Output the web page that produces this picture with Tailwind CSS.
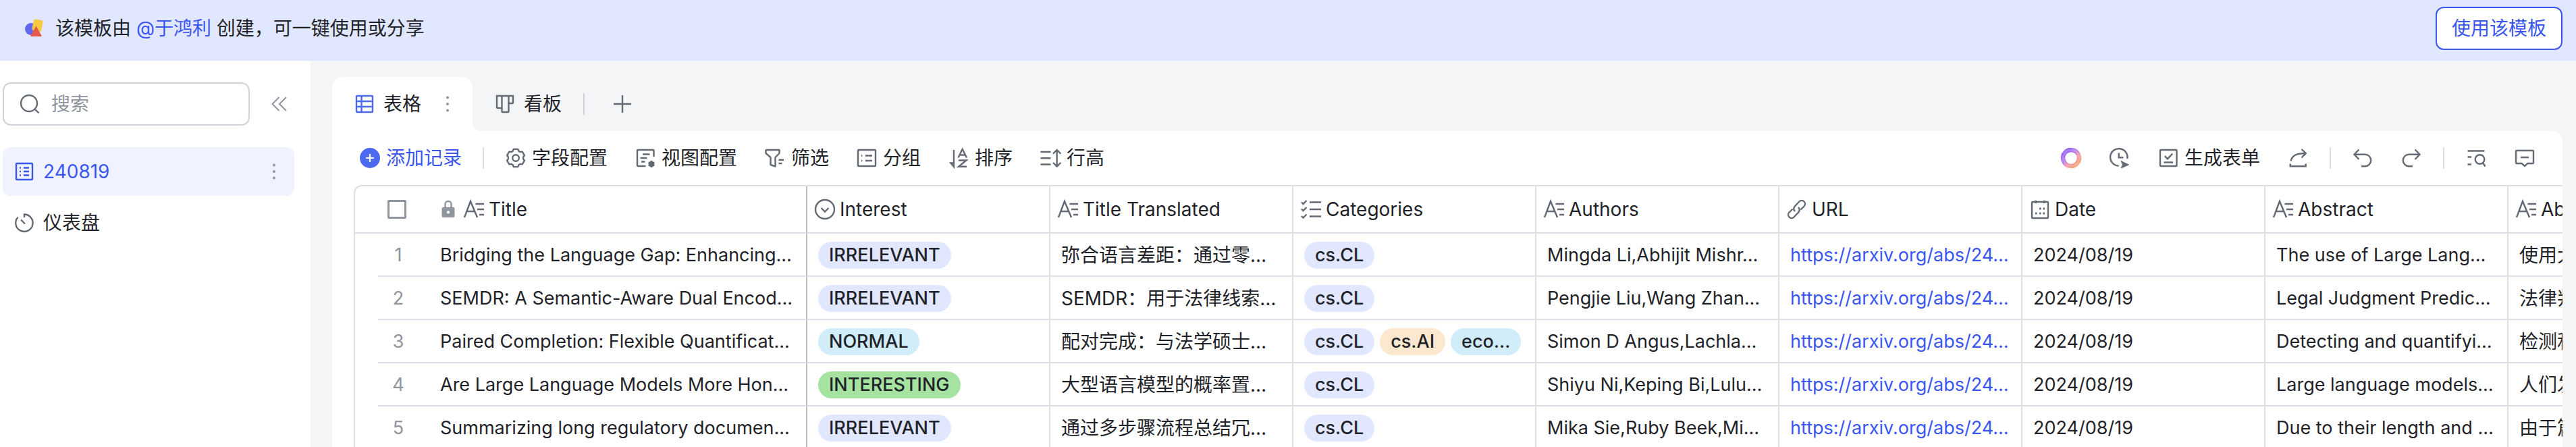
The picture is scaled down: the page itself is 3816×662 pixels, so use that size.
<!DOCTYPE html>
<html lang="zh-CN">
<head>
<meta charset="utf-8">
<meta name="viewport" content="width=device-width, initial-scale=1">
<title>240819</title>
<script src="https://cdn.jsdelivr.net/npm/@tailwindcss/browser@4"></script>
</head>
<body class="flex h-screen flex-col overflow-hidden bg-[#f4f5f7] font-['Inter','Noto_Sans_CJK_SC',sans-serif] text-[28px] leading-10 text-[#1f2329]">

<!-- Icon sprite -->
<svg class="hidden" aria-hidden="true">
  <symbol id="i-text" viewBox="0 0 32 32"><path d="M2 28 11 4 21 28M5.500 19H17.500M18.500 8H31M21 16H31M24 24H31"/></symbol>
  <symbol id="i-sheet" viewBox="0 0 32 32"><rect x="4" y="4" width="24" height="24" rx="1"/><path d="M11.500 4V28M4 12H28M4 20H28"/></symbol>
  <symbol id="i-doc" viewBox="0 0 32 32"><rect x="4" y="4" width="24" height="24" rx="1"/><path d="M9 10.500H11M15 10.500H23M9 16H11M15 16H23M9 21.500H11M15 21.500H23"/></symbol>
  <symbol id="i-gauge" viewBox="0 0 32 32"><path d="M16 8V3.500A12.700 12.700 0 1 1 6.500 7.700M11 11.500 17 17.500"/></symbol>
  <symbol id="i-search" viewBox="0 0 32 32"><circle cx="15" cy="15" r="12"/><path d="M24 24 29.500 29.500"/></symbol>
  <symbol id="i-collapse" viewBox="0 0 32 32"><path d="M15.500 6 5.500 16 15.500 26M26 6 16 16 26 26"/></symbol>
  <symbol id="i-kanban" viewBox="0 0 32 32"><path d="M4 4H28V14A1 1 0 0 1 27 15H21.500V27A1 1 0 0 1 20.500 28H12.500A1 1 0 0 1 11.500 27V22H5A1 1 0 0 1 4 21ZM11.500 4V22M21.500 4V15"/></symbol>
  <symbol id="i-plus" viewBox="0 0 32 32"><path d="M16 3V29M3 16H29"/></symbol>
  <symbol id="i-gear" viewBox="0 0 32 32"><path d="M19.300 2.900 20.200 5.600 22.900 7.200 25.700 6.600 29 12.300 27.100 14.400V17.600L29 19.700 25.700 25.400 22.900 24.800 20.200 26.400 19.300 29.100H12.700L11.800 26.400 9.100 24.800 6.300 25.400 3 19.700 4.900 17.600V14.400L3 12.300 6.300 6.600 9.100 7.200 11.800 5.600 12.700 2.900Z"/><circle cx="16" cy="16" r="4.800"/></symbol>
  <symbol id="i-view" viewBox="0 0 32 32"><path d="M28.500 14V5A1 1 0 0 0 27.500 4H5A1 1 0 0 0 4 5V27A1 1 0 0 0 5 28H16.500M12 10.500H22.500M8.500 16H18.500M10 21.500H15.500"/><path d="M25 20V30M20.700 22.500 29.300 27.500M29.300 22.500 20.700 27.500"/><circle cx="25" cy="25" r="3.200"/></symbol>
  <symbol id="i-filter" viewBox="0 0 32 32"><path d="M3 4H22.500V9L16.500 15V28.500L9.500 26V15L2.500 9V4.500ZM21.500 18.700H29M21.500 24H26.500"/></symbol>
  <symbol id="i-group" viewBox="0 0 32 32"><rect x="3" y="4" width="26" height="24" rx="1"/><path d="M8 12.500H9.500M14 12.500H24M8 20H9.500M14 20H24"/></symbol>
  <symbol id="i-sort" viewBox="0 0 32 32"><path d="M9 4V29L4.500 23.500H9M15.500 15.500 21.700 3 28 15.500M18 11.500H25.500M16 19.500H27.500L16 28.700H28"/></symbol>
  <symbol id="i-height" viewBox="0 0 32 32"><path d="M2.500 7H15.500M2.500 16.300H15.500M2.500 25.500H15.500M25.700 4V28.500M20.700 9 25.700 4 30.700 9M20.700 23.500 25.700 28.500 30.700 23.500"/></symbol>
  <symbol id="i-clock" viewBox="0 0 32 32"><path d="M14.700 27.500A12.700 12.700 0 1 1 27.300 17M14.700 8.500V15.300H21.500"/><path d="M18 20.500 29.500 26 18 31 20.500 26Z" fill="currentColor" stroke-width="1"/></symbol>
  <symbol id="i-form" viewBox="0 0 32 32"><rect x="4" y="4" width="24.500" height="24" rx="1"/><path d="M10.700 13.200 15 17.200 22.300 9.700M9.500 22.500H23"/></symbol>
  <symbol id="i-share" viewBox="0 0 32 32"><path d="M5.500 20.500C7.500 12.500 13 9 27.500 9M21.500 3 27.800 9 21.500 15.500M4.700 24.500V28.300H27.700V24.500"/></symbol>
  <symbol id="i-undo" viewBox="0 0 32 32"><path d="M10.500 3.500 3.500 10.700 10.500 18M4 10.700H19.500A8.700 8.700 0 0 1 19.500 28.200H14"/></symbol>
  <symbol id="i-redo" viewBox="0 0 32 32"><path d="M21.500 3.500 28.500 10.700 21.500 18M28 10.700H12.500A8.700 8.700 0 0 0 12.500 28.200H18"/></symbol>
  <symbol id="i-find" viewBox="0 0 32 32"><path d="M3.500 5.500H28.500M3.500 14.500H9M3.500 25.500H9M26 23 29.500 28.500"/><circle cx="21.500" cy="18" r="6.800"/></symbol>
  <symbol id="i-comment" viewBox="0 0 32 32"><path d="M4 5H28A1 1 0 0 1 29 6V23A1 1 0 0 1 28 24H20.500L16 28 11.500 24H4A1 1 0 0 1 3 23V6A1 1 0 0 1 4 5ZM10 15H22"/></symbol>
  <symbol id="i-select" viewBox="0 0 32 32"><circle cx="16" cy="16" r="14"/><path d="M10.500 14 16 19.500 21.500 14"/></symbol>
  <symbol id="i-multi" viewBox="0 0 32 32"><path d="M2 5.500 4.500 8 9.500 3M2 15.500 4.500 18 9.500 13M2 26 4.500 28.500 9.500 23.500M14 5.500H31M14 16H31M14 26.500H31"/></symbol>
  <symbol id="i-link" viewBox="0 0 32 32"><path d="M13 19C10.500 16.500 11 13.500 13 11.200L19.500 4.500C21.500 2.500 24.500 2.500 26.500 4.500S28.500 9.500 26.500 11.500L21.500 16.500M18 13C20.500 15.500 20 18.500 18 20.800L11.500 27.500C9.500 29.500 6.500 29.500 4.500 27.500S2.500 22.500 4.500 20.500L9.500 15.500"/></symbol>
  <symbol id="i-date" viewBox="0 0 32 32"><rect x="4" y="5" width="24" height="24" rx="1"/><path d="M9.500 3V7M22.500 3V7M15 15H17.500M20.500 15H23M9 22H11.500M15 22H17.500M20.500 22H23" stroke-width="3"/></symbol>
  <symbol id="i-lock" viewBox="0 0 20 32"><path d="M5.500 14V8.500A4.500 4.500 0 0 1 14.500 8.500V14"/><path fill="currentColor" stroke="none" fill-rule="evenodd" d="M2.500 13H17.500A2 2 0 0 1 19.500 15V26A2 2 0 0 1 17.500 28H2.500A2 2 0 0 1 .500 26V15A2 2 0 0 1 2.500 13ZM10 18A2.200 2.200 0 1 0 10 22.400 2.200 2.200 0 1 0 10 18Z"/></symbol>
</svg>

<header class="flex h-[90px] shrink-0 items-center justify-between bg-[#e1e7ff] pr-5 pb-1.5 pl-9">
  <p class="flex items-center gap-[18px]">
    <svg class="size-7" viewBox="0 0 28 28" aria-hidden="true">
      <circle cx="10" cy="15" r="9" fill="#6366ee"/>
      <rect x="12.500" y="1" width="14" height="17" rx="2.500" fill="#f7c944" transform="rotate(10 19 10)"/>
      <path d="M17.500 10.500 25.500 24.500A1 1 0 0 1 24.700 26H10.300A1 1 0 0 1 9.500 24.500Z" fill="#e5584c"/>
    </svg>
    <span>该模板由 <a href="#" class="text-[#3a56f0]">@于鸿利</a> 创建，可一键使用或分享</span>
  </p>
  <button class="h-16 rounded-xl border-2 border-[#3a56f0] bg-white px-[22px] text-[#3a56f0]">使用该模板</button>
</header>

<div class="flex min-h-0 flex-1">
  <aside class="w-[460px] shrink-0 bg-white pt-8 pr-6 pl-1">
    <div class="flex items-center justify-between">
      <label class="flex h-16 w-[366px] items-center gap-4 rounded-xl border-2 border-[#d0d3d8] px-[22px]">
        <svg class="size-8 shrink-0 fill-none stroke-[#646a73] stroke-[2.4]" aria-hidden="true"><use href="#i-search"/></svg>
        <input type="text" aria-label="搜索" placeholder="搜索" class="w-full min-w-0 bg-transparent outline-none placeholder:text-[#8f959e]">
      </label>
      <button aria-label="收起侧栏" class="mr-1.5"><svg class="size-8 fill-none stroke-[#8f959e] stroke-2" aria-hidden="true"><use href="#i-collapse"/></svg></button>
    </div>
    <nav class="mt-8">
      <a href="#" class="flex h-[72px] items-center rounded-xl bg-[#f0f3ff] px-4 text-[#3a56f0]">
        <svg class="size-8 fill-none stroke-current stroke-[2.4]" aria-hidden="true"><use href="#i-doc"/></svg>
        <span class="ml-3 flex-1">240819</span>
        <svg class="mr-2 h-8 w-2 fill-[#8f959e]" viewBox="0 0 8 32" aria-hidden="true"><circle cx="2" cy="6.500" r="2"/><circle cx="2" cy="16" r="2"/><circle cx="2" cy="25.500" r="2"/></svg>
      </a>
      <a href="#" class="mt-1 flex h-[72px] items-center gap-3 px-4">
        <svg class="size-8 fill-none stroke-[#646a73] stroke-[2.4]" aria-hidden="true"><use href="#i-gauge"/></svg>
        <span>仪表盘</span>
      </a>
    </nav>
  </aside>

  <main class="flex min-w-0 flex-1 flex-col pt-6 pr-5 pl-8">
    <div class="flex h-20 shrink-0 items-center">
      <button class="relative flex h-20 w-52 items-center rounded-t-2xl bg-white pl-8">
        <svg class="size-8 fill-none stroke-[#4c6af0] stroke-[2.4]" aria-hidden="true"><use href="#i-sheet"/></svg>
        <span class="ml-3">表格</span>
        <svg class="ml-9 h-8 w-2 fill-[#8f959e]" viewBox="0 0 8 32" aria-hidden="true"><circle cx="3" cy="6.500" r="2"/><circle cx="3" cy="16" r="2"/><circle cx="3" cy="25.500" r="2"/></svg>
        <svg class="absolute bottom-0 left-full size-3 fill-white" viewBox="0 0 12 12" aria-hidden="true"><path d="M0 0A12 12 0 0 0 12 12H0Z"/></svg>
      </button>
      <button class="ml-8 flex items-center gap-3">
        <svg class="size-8 fill-none stroke-[#646a73] stroke-[2.4]" aria-hidden="true"><use href="#i-kanban"/></svg>
        <span>看板</span>
      </button>
      <span class="ml-8 h-8 w-0.5 bg-[#d0d3d8]"></span>
      <button aria-label="新建视图" class="ml-10"><svg class="size-8 fill-none stroke-[#646a73] stroke-[2.4]" aria-hidden="true"><use href="#i-plus"/></svg></button>
    </div>

    <section class="flex min-h-0 flex-1 flex-col rounded-tr-2xl bg-white">
      <div class="flex h-20 shrink-0 items-center justify-between px-10">
        <div class="flex items-center gap-10">
          <div class="flex items-center gap-[31px]">
            <button class="flex items-center gap-2 text-[#3a56f0]">
              <svg class="size-8" viewBox="0 0 32 32" aria-hidden="true"><circle cx="16" cy="16" r="15" fill="#4c6af0"/><path d="M16 10V22M10 16H22" stroke="#fff" stroke-width="2.200"/></svg>
              <span>添加记录</span>
            </button>
            <span class="h-8 w-0.5 bg-[#dedfe4]"></span>
            <button class="flex items-center gap-2"><svg class="size-8 fill-none stroke-[#646a73] stroke-[2.4]" stroke-linejoin="round" aria-hidden="true"><use href="#i-gear"/></svg><span>字段配置</span></button>
          </div>
          <button class="flex items-center gap-2"><svg class="size-8 fill-none stroke-[#646a73] stroke-[2.4]" aria-hidden="true"><use href="#i-view"/></svg><span>视图配置</span></button>
          <button class="flex items-center gap-2"><svg class="size-8 fill-none stroke-[#646a73] stroke-[2.4]" stroke-linejoin="round" aria-hidden="true"><use href="#i-filter"/></svg><span>筛选</span></button>
          <button class="flex items-center gap-2"><svg class="size-8 fill-none stroke-[#646a73] stroke-[2.4]" aria-hidden="true"><use href="#i-group"/></svg><span>分组</span></button>
          <button class="flex items-center gap-2"><svg class="size-8 fill-none stroke-[#646a73] stroke-[2.4]" aria-hidden="true"><use href="#i-sort"/></svg><span>排序</span></button>
          <button class="flex items-center gap-2"><svg class="size-8 fill-none stroke-[#646a73] stroke-[2.4]" stroke-linecap="round" aria-hidden="true"><use href="#i-height"/></svg><span>行高</span></button>
        </div>
        <div class="flex items-center gap-[31px]">
          <div class="flex items-center gap-10">
            <button aria-label="AI 助手">
              <svg class="size-8" viewBox="0 0 32 32" fill="none" aria-hidden="true">
                <defs><linearGradient id="ring" x1="5" y1="4" x2="27" y2="28" gradientUnits="userSpaceOnUse"><stop offset="0" stop-color="#8350f8"/><stop offset=".4" stop-color="#b678ee"/><stop offset=".6" stop-color="#ef8fae"/><stop offset="1" stop-color="#f7a35e"/></linearGradient></defs>
                <circle cx="16" cy="16" r="12" stroke="url(#ring)" stroke-width="6.500"/>
                <g stroke="#fff" stroke-opacity=".2" stroke-width="2.500">
                  <path d="M16 1A15 15 0 0 1 27 16"/><path d="M29 8.500A15 15 0 0 1 21.500 25.500"/><path d="M29 23.500A15 15 0 0 1 10.500 25.500"/><path d="M16 31A15 15 0 0 1 5 16"/><path d="M3 23.500A15 15 0 0 1 10.500 6.500"/><path d="M3 8.500A15 15 0 0 1 21.500 6.500"/>
                </g>
              </svg>
            </button>
            <button aria-label="历史记录"><svg class="size-8 fill-none stroke-[#646a73] stroke-[2.4] text-[#646a73]" aria-hidden="true"><use href="#i-clock"/></svg></button>
            <button class="flex items-center gap-2"><svg class="size-8 fill-none stroke-[#646a73] stroke-[2.4]" aria-hidden="true"><use href="#i-form"/></svg><span>生成表单</span></button>
            <button aria-label="分享"><svg class="size-8 fill-none stroke-[#646a73] stroke-[2.4]" aria-hidden="true"><use href="#i-share"/></svg></button>
          </div>
          <span class="h-8 w-0.5 bg-[#dedfe4]"></span>
          <div class="flex items-center gap-10">
            <button aria-label="撤销"><svg class="size-8 fill-none stroke-[#646a73] stroke-[2.4]" aria-hidden="true"><use href="#i-undo"/></svg></button>
            <button aria-label="重做"><svg class="size-8 fill-none stroke-[#646a73] stroke-[2.4]" aria-hidden="true"><use href="#i-redo"/></svg></button>
          </div>
          <span class="h-8 w-0.5 bg-[#dedfe4]"></span>
          <div class="flex items-center gap-10">
            <button aria-label="查找"><svg class="size-8 fill-none stroke-[#646a73] stroke-[2.4]" aria-hidden="true"><use href="#i-find"/></svg></button>
            <button aria-label="评论"><svg class="size-8 fill-none stroke-[#646a73] stroke-[2.4]" aria-hidden="true"><use href="#i-comment"/></svg></button>
          </div>
        </div>
      </div>

      <div class="ml-8 min-h-0 flex-1 overflow-hidden rounded-tl-xl border-t-2 border-l-2 border-[#dedfe4]">
        <table class="w-[3550px] table-fixed border-separate border-spacing-0 text-left whitespace-nowrap [&_td]:border-b-2 [&_td]:border-[#dedfe4] [&_td]:p-0 [&_td]:pt-0.5 [&_td]:pl-4 [&_th]:border-b-2 [&_th]:border-[#dedfe4] [&_th]:p-0 [&_th]:pl-2.5 [&_th]:font-normal [&_tbody_tr]:h-16 [&_thead_tr]:h-[70px] [&_tr>*:nth-child(n+4)]:border-r-2 [&_tr>*:nth-child(3)]:border-r-2 [&_tr>*:nth-child(3)]:border-r-[#bbbfc4]">
          <colgroup><col class="w-[34px]"><col class="w-[60px]"><col class="w-[576px]"><col class="w-[360px]"><col class="w-[360px]"><col class="w-[360px]"><col class="w-[360px]"><col class="w-[360px]"><col class="w-[360px]"><col class="w-[360px]"><col class="w-[360px]"></colgroup>
          <thead>
            <tr>
              <th></th>
              <th><input type="checkbox" aria-label="全选" class="ml-1 block size-7 appearance-none rounded-xs border-3 border-[#8f959e]"></th>
              <th><div class="flex items-center pl-6"><svg class="h-8 w-5 fill-none stroke-[#8f959e] stroke-[2.4] text-[#8f959e]" aria-hidden="true"><use href="#i-lock"/></svg><svg class="mr-1.5 ml-3 size-8 fill-none stroke-[#646a73] stroke-[2.4]" aria-hidden="true"><use href="#i-text"/></svg>Title</div></th>
              <th><div class="flex items-center gap-1.5"><svg class="size-8 fill-none stroke-[#646a73] stroke-[2.4]" aria-hidden="true"><use href="#i-select"/></svg>Interest</div></th>
              <th><div class="flex items-center gap-1.5"><svg class="size-8 fill-none stroke-[#646a73] stroke-[2.4]" aria-hidden="true"><use href="#i-text"/></svg>Title Translated</div></th>
              <th><div class="flex items-center gap-1.5"><svg class="size-8 fill-none stroke-[#646a73] stroke-[2.4]" aria-hidden="true"><use href="#i-multi"/></svg>Categories</div></th>
              <th><div class="flex items-center gap-1.5"><svg class="size-8 fill-none stroke-[#646a73] stroke-[2.4]" aria-hidden="true"><use href="#i-text"/></svg>Authors</div></th>
              <th><div class="flex items-center gap-1.5"><svg class="size-8 fill-none stroke-[#646a73] stroke-[2.4]" aria-hidden="true"><use href="#i-link"/></svg>URL</div></th>
              <th><div class="flex items-center gap-1.5"><svg class="size-8 fill-none stroke-[#646a73] stroke-[2.4]" aria-hidden="true"><use href="#i-date"/></svg>Date</div></th>
              <th><div class="flex items-center gap-1.5"><svg class="size-8 fill-none stroke-[#646a73] stroke-[2.4]" aria-hidden="true"><use href="#i-text"/></svg>Abstract</div></th>
              <th><div class="flex items-center gap-1.5"><svg class="size-8 fill-none stroke-[#646a73] stroke-[2.4]" aria-hidden="true"><use href="#i-text"/></svg>Abstract</div></th>
            </tr>
          </thead>
          <tbody class="text-[27px] [&_td:first-child]:border-b-0 [&_td:nth-child(2)]:pl-0 [&_td:nth-child(2)]:text-center [&_td:nth-child(2)]:text-[#8f959e] [&_td:nth-child(3)]:pl-8 [&_td:nth-child(5)]:text-[28px] [&_td:nth-child(11)]:text-[28px] [&_a]:text-[#3a56f0] [&_span]:font-medium">
            <tr>
              <td></td><td>1</td><td>Bridging the Language Gap: Enhancing…</td>
              <td><div class="flex"><span class="rounded-full bg-[#e1e7ff] px-4">IRRELEVANT</span></div></td>
              <td>弥合语言差距：通过零…</td>
              <td><div class="flex gap-2"><span class="rounded-full bg-[#e1e7ff] px-4">cs.CL</span></div></td>
              <td>Mingda Li,Abhijit Mishr…</td><td><a href="#">https://arxiv.org/abs/24…</a></td><td>2024/08/19</td><td>The use of Large Lang…</td><td>使用大</td>
            </tr>
            <tr>
              <td></td><td>2</td><td>SEMDR: A Semantic-Aware Dual Encod…</td>
              <td><div class="flex"><span class="rounded-full bg-[#e1e7ff] px-4">IRRELEVANT</span></div></td>
              <td>SEMDR：用于法律线索…</td>
              <td><div class="flex gap-2"><span class="rounded-full bg-[#e1e7ff] px-4">cs.CL</span></div></td>
              <td>Pengjie Liu,Wang Zhan…</td><td><a href="#">https://arxiv.org/abs/24…</a></td><td>2024/08/19</td><td>Legal Judgment Predic…</td><td>法律判</td>
            </tr>
            <tr>
              <td></td><td>3</td><td>Paired Completion: Flexible Quantificat…</td>
              <td><div class="flex"><span class="rounded-full bg-[#d1edfa] px-4">NORMAL</span></div></td>
              <td>配对完成：与法学硕士…</td>
              <td><div class="flex gap-2"><span class="rounded-full bg-[#e1e7ff] px-4">cs.CL</span><span class="rounded-full bg-[#fbe8cf] px-4">cs.AI</span><span class="rounded-full bg-[#d1edfa] px-4">eco…</span></div></td>
              <td>Simon D Angus,Lachla…</td><td><a href="#">https://arxiv.org/abs/24…</a></td><td>2024/08/19</td><td>Detecting and quantifyi…</td><td>检测和</td>
            </tr>
            <tr>
              <td></td><td>4</td><td>Are Large Language Models More Hon…</td>
              <td><div class="flex"><span class="rounded-full bg-[#a6e3a0] px-4">INTERESTING</span></div></td>
              <td>大型语言模型的概率置…</td>
              <td><div class="flex gap-2"><span class="rounded-full bg-[#e1e7ff] px-4">cs.CL</span></div></td>
              <td>Shiyu Ni,Keping Bi,Lulu…</td><td><a href="#">https://arxiv.org/abs/24…</a></td><td>2024/08/19</td><td>Large language models…</td><td>人们发</td>
            </tr>
            <tr>
              <td></td><td>5</td><td>Summarizing long regulatory documen…</td>
              <td><div class="flex"><span class="rounded-full bg-[#e1e7ff] px-4">IRRELEVANT</span></div></td>
              <td>通过多步骤流程总结冗…</td>
              <td><div class="flex gap-2"><span class="rounded-full bg-[#e1e7ff] px-4">cs.CL</span></div></td>
              <td>Mika Sie,Ruby Beek,Mi…</td><td><a href="#">https://arxiv.org/abs/24…</a></td><td>2024/08/19</td><td>Due to their length and …</td><td>由于篇</td>
            </tr>
          </tbody>
        </table>
      </div>
    </section>
  </main>
</div>
</body>
</html>
